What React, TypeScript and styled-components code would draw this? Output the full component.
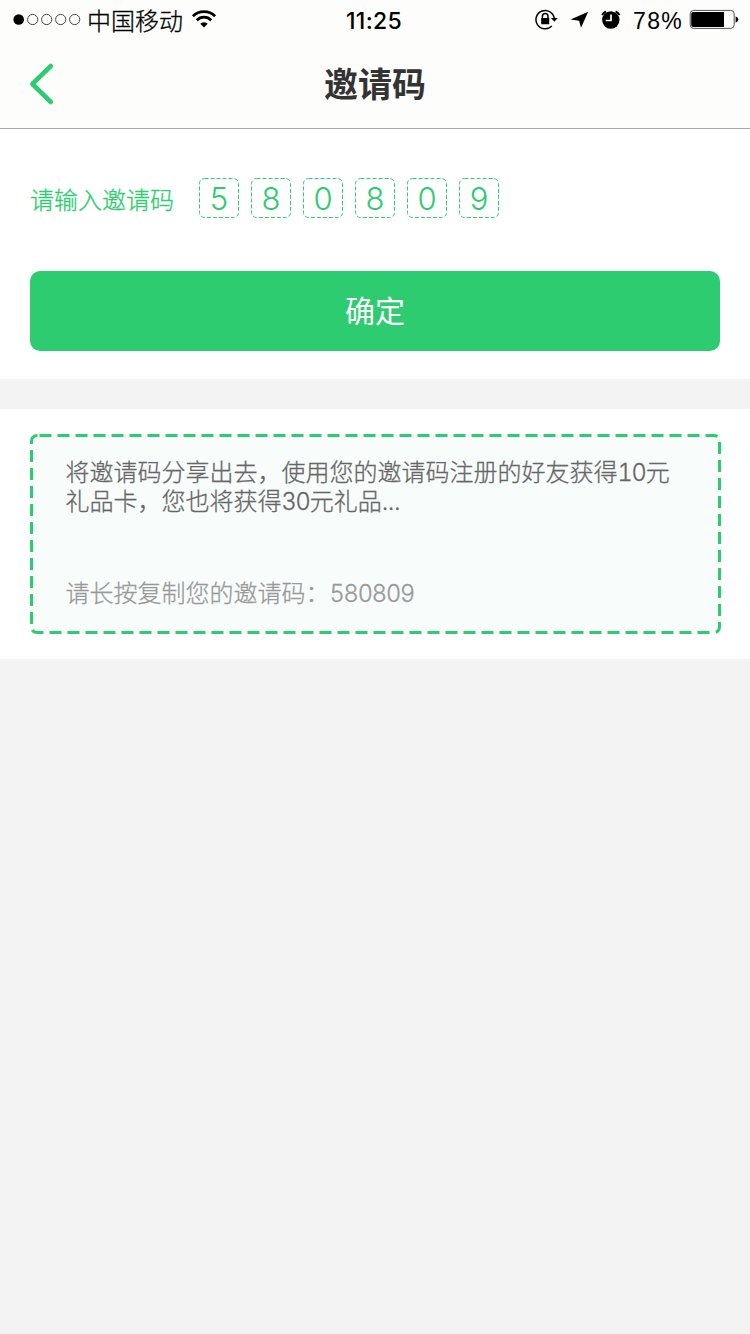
import React from 'react';
import styled, { createGlobalStyle } from 'styled-components';

const GREEN = '#2ecc71';
const CJK = '"Noto Sans CJK SC", sans-serif';
const CJK_LIGHT = '"Noto Sans CJK SC Light", "Noto Sans CJK SC", sans-serif';

const GlobalStyle = createGlobalStyle`
  * { box-sizing: border-box; }
  body { margin: 0; background: #f3f3f3; font-family: "Liberation Sans", ${CJK}; }
`;

const Screen = styled.main`
  display: flex;
  flex-direction: column;
  width: 750px;
  min-height: 1334px;
  background: #f3f3f3;
`;

const Header = styled.header`
  height: 129px;
  background: #fdfdfb;
  border-bottom: 1px solid #a9a9a8;
`;

const StatusBar = styled.div`
  display: grid;
  grid-template-columns: 1fr auto 1fr;
  height: 40px;
  padding: 0 11px 0 12px;
  color: #000;
`;

const StatusGroup = styled.div<{ $end?: boolean }>`
  display: flex;
  align-items: center;
  justify-content: ${(p) => (p.$end ? 'flex-end' : 'flex-start')};
  height: 40px;
`;

const Carrier = styled.span`
  margin: 0 8px 0 5px;
  font: 300 24px/38px ${CJK_LIGHT};
  -webkit-text-stroke: 0.3px currentColor;
`;

const Clock = styled.time`
  margin-right: 3px;
  font: 500 23px/42px Inter, sans-serif;
  letter-spacing: 0.3px;
`;

const Percent = styled.span`
  margin: 2px 6px 0 10px;
  font: 400 23px/40px "Liberation Sans", sans-serif;
  letter-spacing: 1.3px;
`;

const NavBar = styled.div`
  display: grid;
  grid-template-columns: 80px 1fr 80px;
  align-items: center;
  height: 88px;
`;

const BackButton = styled.button`
  width: 80px;
  height: 88px;
  padding: 2px 0 0 28px;
  border: 0;
  background: none;
  text-align: left;
`;

const Title = styled.h1`
  margin: 0;
  color: #333;
  font: 700 34px/84px ${CJK};
  height: 86px;
  text-align: center;
`;

const Panel = styled.section<{ $top: number }>`
  height: 250px;
  padding: ${(p) => p.$top}px 30px 0;
  background: #fff;

  & + & {
    margin-top: 30px;
  }
`;

const CodeRow = styled.div`
  display: flex;
  align-items: center;
  height: 40px;
  color: ${GREEN};
`;

const CodeLabel = styled.label`
  width: 169px;
  padding-top: 2px;
  font: 300 24px/40px ${CJK_LIGHT};
  -webkit-text-stroke: 0.3px currentColor;
`;

const Digits = styled.div`
  display: flex;
  gap: 12px;
`;

const DigitBox = styled.div`
  position: relative;
  width: 40px;
  height: 40px;
  font: 350 31px/41px Inter, sans-serif;
  text-align: center;
`;

const Outline = styled.svg`
  position: absolute;
  inset: 0;
  fill: none;
  stroke: ${GREEN};
`;

const Confirm = styled.button`
  display: block;
  width: 690px;
  height: 80px;
  margin-top: 53px;
  padding: 0 0 3px;
  border: 0;
  border-radius: 10px;
  background: ${GREEN};
  color: #fff;
  font: 400 30px/77px ${CJK};
`;

const ShareCard = styled.div`
  display: flex;
  flex-direction: column;
  justify-content: space-between;
  position: relative;
  width: 691px;
  height: 200px;
  padding: 22px 35.5px 28px;
  border-radius: 10px;
  background: #f8fdfc;
`;

const ShareText = styled.p<{ $muted?: boolean }>`
  margin: 0;
  color: ${(p) => (p.$muted ? '#999' : '#666')};
  font: 300 24px/29px ${CJK_LIGHT};
  -webkit-text-stroke: 0.3px currentColor;
  white-space: nowrap;
`;

const Num = styled.span`
  font: 350 23.5px/1 Inter, sans-serif;
  font-variant-numeric: tabular-nums;
  letter-spacing: -1.1px;
`;

const Dots = styled.span`
  font: 350 23.5px/1 Inter, sans-serif;
  letter-spacing: -0.5px;
`;

const Signal = () => (
  <svg width="70" height="40" viewBox="0 0 70 40" fill="none" stroke="#444" strokeWidth="1">
    <circle cx="6.7" cy="19.5" r="5.3" fill="#000" stroke="none" />
    {[20.7, 34.7, 48.7, 62.7].map((x) => (
      <circle key={x} cx={x} cy="19.5" r="5.1" />
    ))}
  </svg>
);

const Wifi = () => (
  <svg width="26" height="22" viewBox="0 0 26 22" fill="none" stroke="#000" strokeWidth="2.7">
    <path d="M1.9 7.2a15.8 15.8 0 0 1 22.2 0M5.8 11.2a10.2 10.2 0 0 1 14.4 0" />
    <path d="M9.3 14.8a5.2 5.2 0 0 1 7.4 0L13 18.6z" fill="#000" stroke="none" />
  </svg>
);

const StatusIcons = () => (
  <svg width="88" height="40" viewBox="535 0 88 40">
    <g fill="none" stroke="#000" strokeWidth="1.5">
      <path d="M554.3 18.6a9.2 9.2 0 1 0-2.5 7.4" />
      <path d="M542.4 18.5v-2.2a2.8 2.8 0 0 1 5.6 0v2.2" />
    </g>
    <path d="M541.2 18h8v6.2h-8zM551 18h6.8l-3.4 3.8zM588.2 11.8l-7.2 16-1.9-7-8.6-1.2z" />
    <circle cx="610.8" cy="20" r="8.7" />
    <path d="M602 15a14 14 0 0 1 4-3.7M619.6 15a14 14 0 0 0-4-3.7" fill="none" stroke="#000" strokeWidth="2" />
    <path d="M611 14.5v6h-5.3" fill="none" stroke="#fff" strokeWidth="1.7" />
  </svg>
);

const Battery = () => (
  <svg width="50" height="22" viewBox="0 0 50 22">
    <rect x="1.2" y="1.4" width="44" height="18" rx="3.5" fill="none" stroke="#555" />
    <path d="M4.2 2.9H35v15H4.2a2 2 0 0 1-2-2v-11a2 2 0 0 1 2-2z" />
    <path d="M46.6 7.2q2.8 1.2 2.8 3.3t-2.8 3.3z" />
  </svg>
);

export default function App() {
  return (
    <>
      <GlobalStyle />
      <Screen>
        <Header>
          <StatusBar>
            <StatusGroup>
              <Signal />
              <Carrier>中国移动</Carrier>
              <Wifi />
            </StatusGroup>
            <Clock>11:25</Clock>
            <StatusGroup $end>
              <StatusIcons />
              <Percent>78%</Percent>
              <Battery />
            </StatusGroup>
          </StatusBar>
          <NavBar>
            <BackButton aria-label="返回">
              <svg width="28" height="44" viewBox="0 0 28 44" fill="none" stroke={GREEN} strokeWidth="4.6" strokeLinecap="round" strokeLinejoin="round">
                <path d="M22.8 4 4.4 22l18.4 18" />
              </svg>
            </BackButton>
            <Title>邀请码</Title>
          </NavBar>
        </Header>

        <Panel $top={49}>
          <CodeRow>
            <CodeLabel>请输入邀请码</CodeLabel>
            <Digits>
              {'580809'.split('').map((digit, i) => (
                <DigitBox key={i}>
                  <Outline width="40" height="40">
                    <rect x=".5" y=".5" width="39" height="39" rx="5" strokeDasharray="4 2" />
                  </Outline>
                  {digit}
                </DigitBox>
              ))}
            </Digits>
          </CodeRow>
          <Confirm>确定</Confirm>
        </Panel>

        <Panel $top={25}>
          <ShareCard>
            <Outline width="691" height="200" strokeWidth="3" strokeDasharray="12 6">
              <path d="M9.5 1.5H683.5Q689.5 1.5 689.5 7.5V192.5Q689.5 198.5 683.5 198.5H7.5Q1.5 198.5 1.5 192.5V7.5Q1.5 1.5 7.5 1.5" />
            </Outline>
            <ShareText>
              将邀请码分享出去，使用您的邀请码注册的好友获得<Num>10</Num>元<br />
              礼品卡，您也将获得<Num>30</Num>元礼品<Dots>...</Dots>
            </ShareText>
            <ShareText $muted>
              请长按复制您的邀请码：<Num>580809</Num>
            </ShareText>
          </ShareCard>
        </Panel>
      </Screen>
    </>
  );
}
